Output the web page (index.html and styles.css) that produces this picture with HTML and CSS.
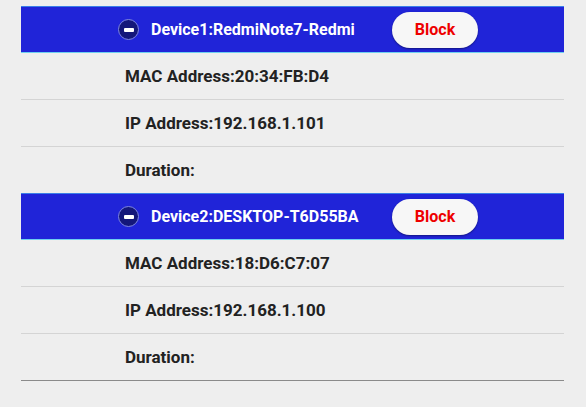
FILE: index.html
```html
<!DOCTYPE html>
<html>
<head>
<meta charset="utf-8">
<link rel="stylesheet" href="styles.css">
</head>
<body>
<div class="list">
  <div class="device">
    <div class="head">
      <span class="toggle"><span class="bar"></span></span>
      <span class="name">Device1:RedmiNote7-Redmi</span>
      <button class="block">Block</button>
    </div>
    <div class="row">MAC Address:20:34:FB:D4</div>
    <div class="row">IP Address:192.168.1.101</div>
    <div class="row last">Duration:</div>
  </div>
  <div class="device">
    <div class="head">
      <span class="toggle"><span class="bar"></span></span>
      <span class="name">Device2:DESKTOP-T6D55BA</span>
      <button class="block">Block</button>
    </div>
    <div class="row">MAC Address:18:D6:C7:07</div>
    <div class="row">IP Address:192.168.1.100</div>
    <div class="row end">Duration:</div>
  </div>
</div>
</body>
</html>
```
FILE: styles.css
```css
html, body {
  margin: 0;
  padding: 0;
  background: #eeeeee;
  font-family: Roboto, "Liberation Sans", sans-serif;
}
.list {
  margin: 6px 22px 0 21px;
}
.head {
  background: #2024d8;
  border-top: 1px solid #3a7ee8;
  border-bottom: 1px solid #6fd0f0;
  display: flex;
  align-items: center;
  padding-left: 97px;
  box-sizing: border-box;
  height: 47px;
}
.toggle {
  width: 19px;
  height: 19px;
  border-radius: 50%;
  background: #14177a;
  border: 1px solid #7f87e0;
  display: flex;
  align-items: center;
  justify-content: center;
  margin-right: 12px;
}
.bar {
  width: 10px;
  height: 4px;
  background: #ffffff;
  border-radius: 1px;
}
.name {
  color: #ffffff;
  font-weight: bold;
  font-size: 16px;
  width: 241px;
}
.block {
  width: 86px;
  height: 36px;
  border: none;
  border-radius: 18px;
  background: #f7f7f7;
  color: #ee0000;
  font-family: Roboto, "Liberation Sans", sans-serif;
  font-weight: bold;
  font-size: 16px;
  padding: 0;
  box-shadow: 0 1px 2px rgba(0,0,0,0.4);
}
.row {
  height: 46.8px;
  box-sizing: border-box;
  border-bottom: 1px solid #d4d4d4;
  display: flex;
  align-items: center;
  padding-left: 104px;
  font-weight: bold;
  font-size: 17px;
  color: #222222;
}
.row.last {
  border-bottom: none;
}
.row.end {
  border-bottom: 1px solid #8a8a8a;
}
```
